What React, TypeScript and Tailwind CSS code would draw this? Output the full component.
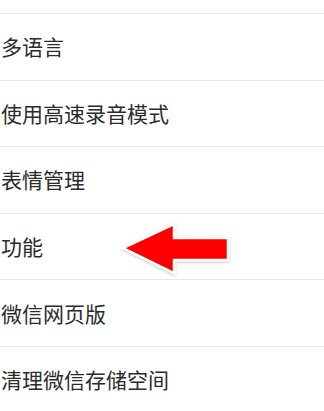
import React from "react";

const items = ["多语言", "使用高速录音模式", "表情管理", "功能", "微信网页版", "清理微信存储空间"];

export default function App() {
  return (
    <div
      className="relative w-[324px] h-[411px] overflow-hidden bg-white"
      style={{ fontFamily: '"Noto Sans CJK SC", "Noto Sans", sans-serif' }}
    >
      <div className="h-[14px] border-b-[1.5px] border-[#ececec]" />
      {items.map((t) => (
        <div
          key={t}
          className="h-[66.6px] flex items-center pl-[1px] border-b border-[#e8e8e8] text-[21px] text-[#2b2b2b] leading-none"
        >
          {t}
        </div>
      ))}
      <svg
        className="absolute left-0 top-0"
        width="324"
        height="411"
        viewBox="0 0 324 411"
      >
        <defs>
          <filter id="sh" x="-20%" y="-20%" width="140%" height="140%">
            <feDropShadow dx="0" dy="1" stdDeviation="1.5" floodColor="#000" floodOpacity="0.25" />
          </filter>
        </defs>
        <polygon
          points="123,248 174,224 174,238 228,238 228,260 174,260 174,273"
          fill="#ff0000"
          stroke="#ffffff"
          strokeWidth="2.5"
          strokeLinejoin="miter"
          filter="url(#sh)"
        />
      </svg>
    </div>
  );
}
